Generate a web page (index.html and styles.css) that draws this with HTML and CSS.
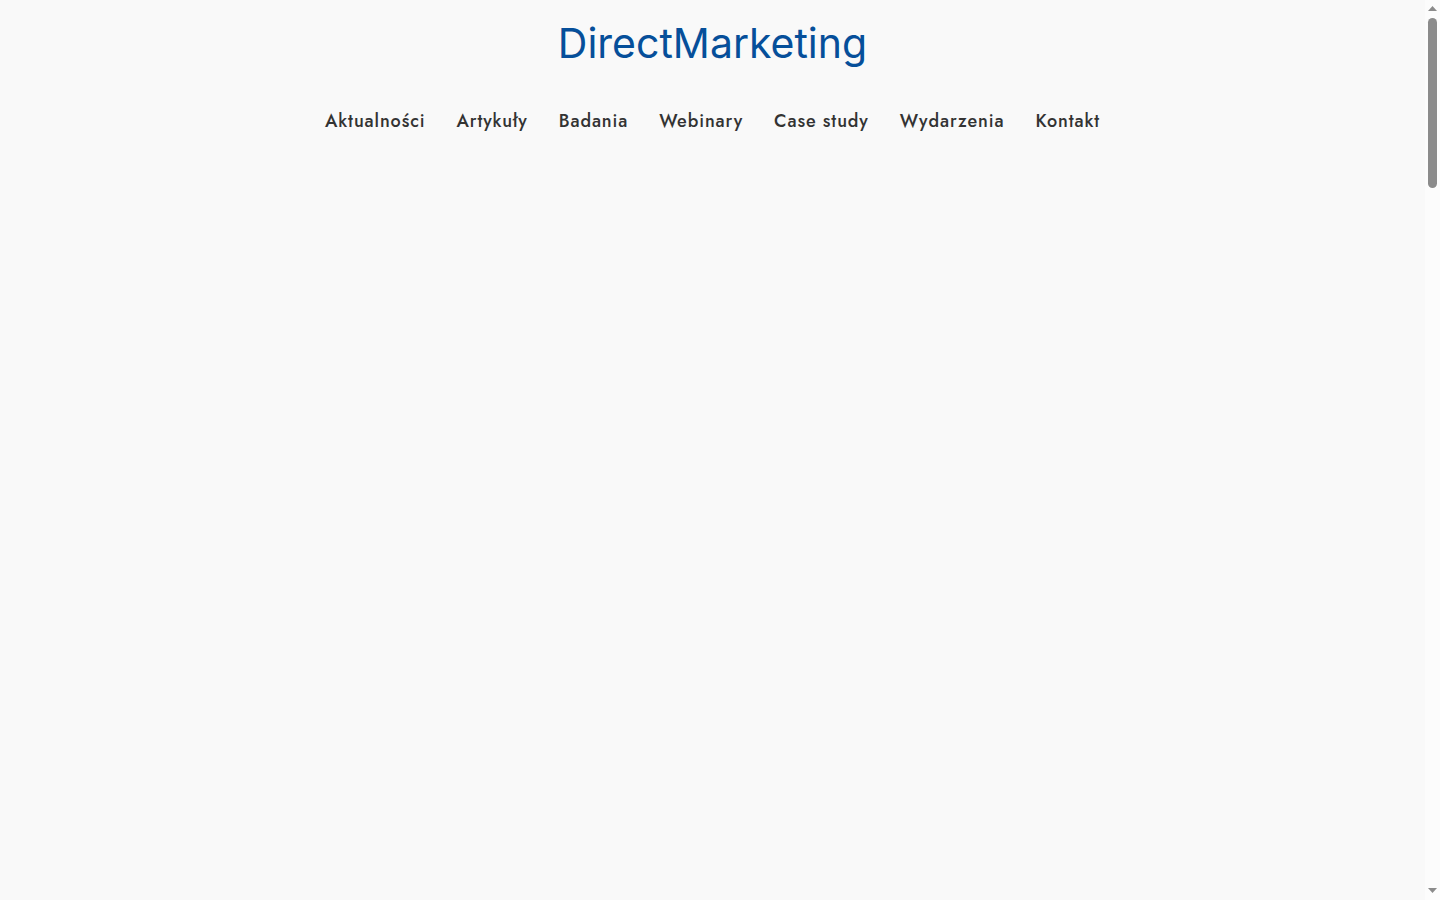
FILE: index.html
```html
<!DOCTYPE html>
<html lang="pl">
<head>
<meta charset="utf-8">
<meta name="viewport" content="width=device-width, initial-scale=1">
<title>DirectMarketing</title>
<link rel="stylesheet" href="styles.css">
</head>
<body>
<div class="page">
  <div class="content">
    <header class="header">
      <a class="logo" href="#">DirectMarketing</a>
      <nav class="nav" aria-label="Menu">
        <a class="nav-link" href="#">Aktualności</a>
        <a class="nav-link" href="#">Artykuły</a>
        <a class="nav-link" href="#">Badania</a>
        <a class="nav-link" href="#">Webinary</a>
        <a class="nav-link" href="#">Case study</a>
        <a class="nav-link" href="#">Wydarzenia</a>
        <a class="nav-link" href="#">Kontakt</a>
      </nav>
    </header>
    <main class="main"></main>
  </div>
  <div class="scrollbar" aria-hidden="true">
    <svg class="arrow" viewBox="0 0 9 5"><path d="M0 5 4.500 0 9 5z"/></svg>
    <div class="track"><div class="thumb"></div></div>
    <svg class="arrow" viewBox="0 0 9 5"><path d="M0 0h9L4.500 5z"/></svg>
  </div>
</div>
</body>
</html>
```
FILE: styles.css
```css
* {
  box-sizing: border-box;
}

body {
  margin: 0;
  background: #f9f9f9;
  color: #333;
  font-family: Jost, Lato, sans-serif;
}

.page {
  display: flex;
  min-height: 100vh;
}

.content {
  flex: 1;
}

.header {
  display: flex;
  flex-direction: column;
  align-items: center;
  gap: 37px;
  padding: 17px 16px;
}

.logo {
  color: #064f9a;
  font: 400 41px/52px Inter, sans-serif;
  text-decoration: none;
}

.nav {
  display: flex;
  flex-wrap: wrap;
  justify-content: center;
  gap: 8px 31px;
}

.nav-link {
  color: #333;
  font-size: 18px;
  font-weight: 500;
  line-height: 30px;
  letter-spacing: 0.05em;
  text-decoration: none;
}

.scrollbar {
  display: flex;
  flex-direction: column;
  align-items: center;
  gap: 7px;
  width: 15px;
  padding: 6px 0 7px;
  background: #fcfcfc;
}

.arrow {
  width: 9px;
  height: 5px;
  fill: #8b8b8b;
}

.track {
  flex: 1;
  width: 9px;
}

.thumb {
  height: 170px;
  border-radius: 5px;
  background: #8b8b8b;
}
```
